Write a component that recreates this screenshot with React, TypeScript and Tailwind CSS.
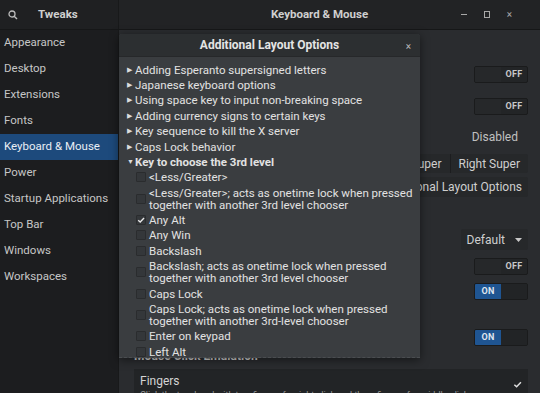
import React from "react";

const font = { fontFamily: "Roboto, 'Noto Sans', sans-serif" };

const sidebarItems = [
  "Appearance",
  "Desktop",
  "Extensions",
  "Fonts",
  "Keyboard & Mouse",
  "Power",
  "Startup Applications",
  "Top Bar",
  "Windows",
  "Workspaces",
];

type Row =
  | { kind: "group"; label: string; open?: boolean }
  | { kind: "check"; lines: string[]; checked?: boolean };

const rows: Row[] = [
  { kind: "group", label: "Adding Esperanto supersigned letters" },
  { kind: "group", label: "Japanese keyboard options" },
  { kind: "group", label: "Using space key to input non-breaking space" },
  { kind: "group", label: "Adding currency signs to certain keys" },
  { kind: "group", label: "Key sequence to kill the X server" },
  { kind: "group", label: "Caps Lock behavior" },
  { kind: "group", label: "Key to choose the 3rd level", open: true },
  { kind: "check", lines: ["<Less/Greater>"] },
  {
    kind: "check",
    lines: [
      "<Less/Greater>; acts as onetime lock when pressed",
      "together with another 3rd level chooser",
    ],
  },
  { kind: "check", lines: ["Any Alt"], checked: true },
  { kind: "check", lines: ["Any Win"] },
  { kind: "check", lines: ["Backslash"] },
  {
    kind: "check",
    lines: [
      "Backslash; acts as onetime lock when pressed",
      "together with another 3rd level chooser",
    ],
  },
  { kind: "check", lines: ["Caps Lock"] },
  {
    kind: "check",
    lines: [
      "Caps Lock; acts as onetime lock when pressed",
      "together with another 3rd-level chooser",
    ],
  },
  { kind: "check", lines: ["Enter on keypad"] },
  { kind: "check", lines: ["Left Alt"] },
];

function Switch({ on }: { on?: boolean }) {
  return (
    <div className="flex h-[17px] w-[54px] overflow-hidden rounded-[2px] border border-[#1a1b1c] bg-[#232527] text-[9px] font-bold tracking-wide">
      {on ? (
        <>
          <div className="flex w-1/2 items-center justify-center bg-[#1f5592] text-[#dfe6ee]">ON</div>
          <div className="w-1/2 bg-[#222426]" />
        </>
      ) : (
        <>
          <div className="w-1/2 bg-[#26282a]" />
          <div className="flex w-1/2 items-center justify-center text-[#c8c8c8]">OFF</div>
        </>
      )}
    </div>
  );
}

function Checkbox({ checked }: { checked?: boolean }) {
  return (
    <div className="flex h-[10px] w-[10px] shrink-0 items-center justify-center rounded-[1px] border border-[#2a2c2e] bg-[#34373a]">
      {checked && (
        <svg width="10" height="10" viewBox="0 0 10 10">
          <path d="M1.5 5.2 L4 7.6 L8.8 2.4" stroke="#e8e8e8" strokeWidth="1.7" fill="none" />
        </svg>
      )}
    </div>
  );
}

function Dialog() {
  return (
    <div className="absolute left-0 top-[4px] w-[301px] overflow-hidden rounded-t-[3px] bg-[#3a3d40] shadow-[0_2px_10px_rgba(0,0,0,0.5)]">
      <div className="relative flex h-[23px] items-center justify-center border-b border-[#26282a] bg-[#2c2f31]">
        <span className="text-[12px] font-bold text-[#e4e4e4]">Additional Layout Options</span>
        <span className="absolute right-[9px] top-[5px] text-[10px] text-[#b8b8b8]">×</span>
      </div>
      <div className="flex h-[301px] flex-col overflow-hidden border-b border-dashed border-[#4a4d50] pl-[8px] pt-[5px] text-[11.5px] leading-[12px] text-[#e2e2e2]">
        {rows.map((r, i) =>
          r.kind === "group" ? (
            <div key={i} className="flex items-center py-[1.7px]">
              <span className="w-[8px] text-[7px] leading-[12px] text-[#dcdcdc]">{r.open ? "▼" : "▶"}</span>
              <div className={r.open ? "font-bold" : ""}>{r.label}</div>
            </div>
          ) : (
            <div key={i} className="flex items-center gap-[3px] py-[1.7px] pl-[9px]">
              <Checkbox checked={r.checked} />
              <div className="flex flex-col">
                {r.lines.map((l) => (
                  <div key={l} className="h-[12px]">{l}</div>
                ))}
              </div>
            </div>
          )
        )}
      </div>
    </div>
  );
}

export default function App() {
  return (
    <div style={font} className="flex h-[393px] w-[540px] flex-col overflow-hidden bg-[#2a2c2f] text-[#d0d0d0]">
      <div className="flex h-[30px] shrink-0 border-b border-[#161718] bg-[#222325]">
        <div className="flex w-[119px] items-center border-r border-[#18191a] bg-[#1f2022]">
          <svg className="ml-[8px]" width="10" height="10" viewBox="0 0 10 10">
            <circle cx="4" cy="4" r="3" stroke="#bdbdbd" strokeWidth="1.3" fill="none" />
            <path d="M6.2 6.2 L9 9" stroke="#bdbdbd" strokeWidth="1.4" />
          </svg>
          <span className="ml-[20px] text-[11.5px] font-bold text-[#cfcfcf]">Tweaks</span>
        </div>
        <div className="relative flex flex-1 items-center justify-center">
          <span className="ml-[-20px] text-[11.5px] font-bold text-[#cfcfcf]">Keyboard &amp; Mouse</span>
          <div className="absolute right-[28px] top-0 flex h-full items-center gap-[17px] text-[10px] text-[#a8a8a8]">
            <span className="block h-[1px] w-[6px] bg-[#a8a8a8]" />
            <span className="block h-[7px] w-[6px] border border-[#a8a8a8]" />
            <span className="leading-none">×</span>
          </div>
        </div>
      </div>
      <div className="flex flex-1">
        <div className="flex w-[119px] shrink-0 flex-col border-r border-[#18191a] bg-[#1c1d1f] text-[11.5px] text-[#c6c6c6]">
          {sidebarItems.map((s) => (
            <div
              key={s}
              className={`flex h-[26px] items-center pl-[4px] ${s === "Keyboard & Mouse" ? "bg-[#1d4a7c] text-[#e8eef5]" : ""}`}
            >
              {s}
            </div>
          ))}
        </div>
        <div className="relative flex flex-1 flex-col text-[12px] text-[#cfcfcf]">
          <div className="flex flex-col items-end pr-[12px]">
            <div className="mt-[36px]"><Switch /></div>
            <div className="mt-[15px]"><Switch /></div>
            <div className="mt-[13px] pr-[10px] text-[#c0c0c0]">Disabled</div>
            <div className="mt-[8px] flex h-[19px] overflow-hidden rounded-[2px] bg-[#26282a]">
              <div className="flex items-center px-[8px]">Left Super</div>
              <div className="flex items-center border-l border-[#1c1d1f] px-[8px]">Right Super</div>
            </div>
            <div className="mt-[4px] flex h-[20px] items-center rounded-[2px] bg-[#26282a] px-[6px]">Additional Layout Options</div>
            <div className="mt-[32px] flex h-[21px] items-center gap-[10px] rounded-[2px] bg-[#26282a] px-[6px]">
              <span>Default</span>
              <svg width="7" height="4" viewBox="0 0 7 4"><path d="M0 0 L7 0 L3.5 4 Z" fill="#c8c8c8" /></svg>
            </div>
            <div className="mt-[8px]"><Switch /></div>
            <div className="mt-[8px]"><Switch on /></div>
            <div className="mt-[29px]"><Switch on /></div>
          </div>
          <div className="ml-[15px] mt-[1px] text-[12px] font-bold text-[#d0d0d0]">Mouse Click Emulation</div>
          <div className="ml-[15px] mr-[12px] mt-[4px] flex-1 bg-[#222426] px-[6px] pt-[3px]">
            <div className="flex items-center justify-between">
              <span className="text-[12px] text-[#d4d4d4]">Fingers</span>
              <svg width="9" height="9" viewBox="0 0 10 10" className="mt-[6px]">
                <path d="M1.5 5.2 L4 7.6 L8.8 2.4" stroke="#e0e0e0" strokeWidth="1.6" fill="none" />
              </svg>
            </div>
            <div className="text-[9px] leading-[10px] text-[#9a9a9a]">Click the touchpad with two fingers for right-click and three fingers for middle-click</div>
          </div>
          <Dialog />
        </div>
      </div>
    </div>
  );
}
